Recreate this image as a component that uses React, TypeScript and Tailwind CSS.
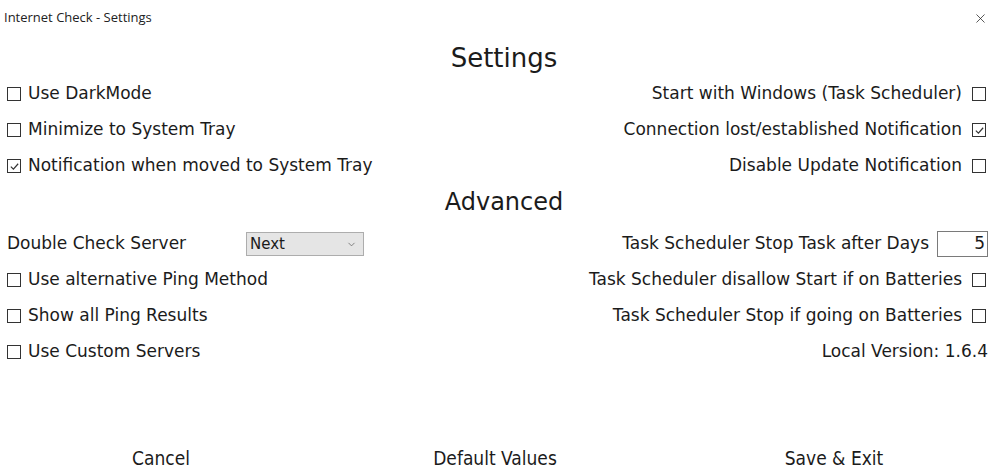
import { ChevronDown, X } from 'lucide-react';

const font = "font-['DejaVu_Sans','Liberation_Sans',sans-serif]";

function Box({ checked = false }: { checked?: boolean }) {
  return (
    <span className="inline-flex h-[14px] w-[14px] shrink-0 items-center justify-center border border-[#333] bg-white">
      {checked && (
        <svg viewBox="0 0 12 12" className="h-[11px] w-[11px]" fill="none" stroke="#333" strokeWidth="1.3">
          <path d="M2 6.2 L4.8 9 L10 3" />
        </svg>
      )}
    </span>
  );
}

function LeftCheck({ label, checked }: { label: string; checked?: boolean }) {
  return (
    <div className="flex h-[36px] items-center gap-[7px]">
      <Box checked={checked} />
      <span>{label}</span>
    </div>
  );
}

function RightCheck({ label, checked }: { label: string; checked?: boolean }) {
  return (
    <div className="flex h-[36px] items-center justify-end gap-[10px]">
      <span>{label}</span>
      <Box checked={checked} />
    </div>
  );
}

export default function App() {
  return (
    <div className={`flex h-[470px] w-[1000px] flex-col bg-white text-[#1b1b1b] ${font}`}>
      {/* title bar */}
      <div className="flex h-[36px] items-center justify-between pl-[4px] pr-[12px]">
        <span className="font-['Open_Sans',sans-serif] text-[13px] text-[#222]">Internet Check - Settings</span>
        <X className="h-[15px] w-[15px] text-[#222]" strokeWidth={1.2} />
      </div>

      <h1 className="mt-[4px] pl-[8px] text-center text-[26px] leading-[36px]">Settings</h1>

      <div className="grid grid-cols-2 pl-[7px] pr-[14px] text-[17px]">
        <div>
          <LeftCheck label="Use DarkMode" />
          <LeftCheck label="Minimize to System Tray" />
          <LeftCheck label="Notification when moved to System Tray" checked />
        </div>
        <div>
          <RightCheck label="Start with Windows (Task Scheduler)" />
          <RightCheck label="Connection lost/established Notification" checked />
          <RightCheck label="Disable Update Notification" />
        </div>
      </div>

      <h2 className="pl-[8px] text-center text-[24px] leading-[36px]">Advanced</h2>

      <div className="mt-[6px] grid grid-cols-2 pl-[7px] pr-[12px] text-[17px]">
        <div>
          <div className="flex h-[36px] items-center">
            <span className="w-[239px]">Double Check Server</span>
            <div className="flex h-[24px] w-[118px] items-center justify-between border border-[#adadad] bg-[#e5e5e5] pl-[3px] pr-[6px] text-[15px]">
              <span>Next</span>
              <ChevronDown className="h-[11px] w-[11px] text-[#555]" strokeWidth={1.5} />
            </div>
          </div>
          <LeftCheck label="Use alternative Ping Method" />
          <LeftCheck label="Show all Ping Results" />
          <LeftCheck label="Use Custom Servers" />
        </div>
        <div>
          <div className="flex h-[36px] items-center justify-end gap-[8px]">
            <span>Task Scheduler Stop Task after Days</span>
            <div className="flex h-[26px] w-[51px] items-center justify-end border border-[#7a7a7a] pr-[2px]">5</div>
          </div>
          <div className="pr-[2px]">
            <RightCheck label="Task Scheduler disallow Start if on Batteries" />
            <RightCheck label="Task Scheduler Stop if going on Batteries" />
          </div>
          <div className="flex h-[36px] items-center justify-end">Local Version: 1.6.4</div>
        </div>
      </div>

      <div className="flex-1" />

      <div className="mb-[2px] grid h-[24px] grid-cols-[322px_346px_332px] items-center font-['DejaVu_Sans_Condensed','Liberation_Sans',sans-serif] text-[19px]">
        <button className="text-center">Cancel</button>
        <button className="text-center">Default Values</button>
        <button className="text-center">Save &amp; Exit</button>
      </div>
    </div>
  );
}
